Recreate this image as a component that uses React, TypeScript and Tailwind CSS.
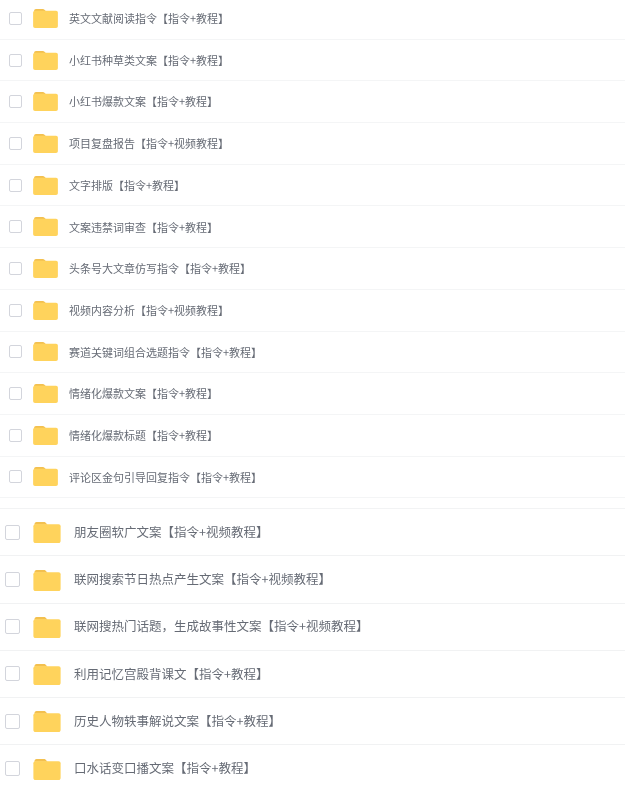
const topRows = [
  ["英文文献阅读指令", "教程"],
  ["小红书种草类文案", "教程"],
  ["小红书爆款文案", "教程"],
  ["项目复盘报告", "视频教程"],
  ["文字排版", "教程"],
  ["文案违禁词审查", "教程"],
  ["头条号大文章仿写指令", "教程"],
  ["视频内容分析", "视频教程"],
  ["赛道关键词组合选题指令", "教程"],
  ["情绪化爆款文案", "教程"],
  ["情绪化爆款标题", "教程"],
  ["评论区金句引导回复指令", "教程"],
];

const bottomRows = [
  ["朋友圈软广文案", "视频教程"],
  ["联网搜索节日热点产生文案", "视频教程"],
  ["联网搜热门话题，生成故事性文案", "视频教程"],
  ["利用记忆宫殿背课文", "教程"],
  ["历史人物轶事解说文案", "教程"],
  ["口水话变口播文案", "教程"],
];

function Folder({ className }: { className: string }) {
  return (
    <svg viewBox="0 0 26 21" className={className}>
      <path d="M1 3.5C1 1.8 1.8 1 3 1h7c1 0 1.6.4 2.2 1.1L13.5 3.5H1z" fill="#f3c04f" />
      <path d="M0 5c0-1.2.8-2 2-2h22c1.2 0 2 .8 2 2v14c0 1.2-.8 2-2 2H2c-1.2 0-2-.8-2-2V5z" fill="#ffd35c" />
    </svg>
  );
}

function Label({ name, kind }: { name: string; kind: string }) {
  return (
    <>
      {name}【指令<span>+</span>{kind}】
    </>
  );
}

export default function App() {
  return (
    <div className="w-[625px] h-[787px] overflow-hidden bg-white font-['Noto_Sans_CJK_SC',sans-serif] text-[#666b75] blur-[0.35px]">
      <div className="-mt-[2px]">
        {topRows.map(([name, kind]) => (
          <div key={name} className="flex items-center h-[41.7px] border-b border-[#f4f5f6]">
            <span className="ml-[9px] w-[13px] h-[13px] rounded-[2px] border border-[#d3d5dc] bg-white" />
            <Folder className="ml-[11px] w-[25px] h-[20px] mb-[1px]" />
            <span className="ml-[11px] text-[11px]">
              <Label name={name} kind={kind} />
            </span>
          </div>
        ))}
      </div>
      <div className="h-[11px] border-b border-[#f2f3f4]" />
      {bottomRows.map(([name, kind]) => (
        <div key={name} className="flex items-center h-[47.2px] border-b border-[#f1f2f3] last:border-b-0">
          <span className="ml-[5px] w-[15px] h-[15px] rounded-[2px] border border-[#d3d5dc] bg-white" />
          <Folder className="ml-[13px] w-[28px] h-[22px]" />
          <span className="ml-[13px] text-[12.5px]">
            <Label name={name} kind={kind} />
          </span>
        </div>
      ))}
    </div>
  );
}
